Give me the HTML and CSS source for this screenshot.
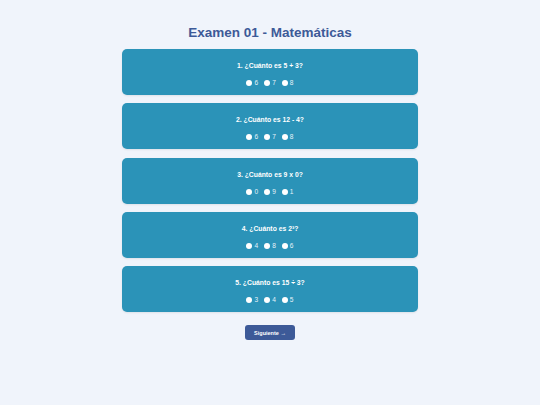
FILE: index.html
```html
<!DOCTYPE html>
<html lang="es">
<head>
<meta charset="utf-8">
<title>Examen 01 - Matemáticas</title>
<link rel="stylesheet" href="styles.css">
</head>
<body>
<main class="page">
  <h1 class="title">Examen 01 - Matemáticas</h1>
  <div class="questions">
    <section class="card">
      <p class="question">1. ¿Cuánto es 5 + 3?</p>
      <div class="options">
        <label class="option"><span class="radio"></span>6</label>
        <label class="option"><span class="radio"></span>7</label>
        <label class="option"><span class="radio"></span>8</label>
      </div>
    </section>
    <section class="card">
      <p class="question">2. ¿Cuánto es 12 - 4?</p>
      <div class="options">
        <label class="option"><span class="radio"></span>6</label>
        <label class="option"><span class="radio"></span>7</label>
        <label class="option"><span class="radio"></span>8</label>
      </div>
    </section>
    <section class="card">
      <p class="question">3. ¿Cuánto es 9 x 0?</p>
      <div class="options">
        <label class="option"><span class="radio"></span>0</label>
        <label class="option"><span class="radio"></span>9</label>
        <label class="option"><span class="radio"></span>1</label>
      </div>
    </section>
    <section class="card">
      <p class="question">4. ¿Cuánto es 2³?</p>
      <div class="options">
        <label class="option"><span class="radio"></span>4</label>
        <label class="option"><span class="radio"></span>8</label>
        <label class="option"><span class="radio"></span>6</label>
      </div>
    </section>
    <section class="card">
      <p class="question">5. ¿Cuánto es 15 ÷ 3?</p>
      <div class="options">
        <label class="option"><span class="radio"></span>3</label>
        <label class="option"><span class="radio"></span>4</label>
        <label class="option"><span class="radio"></span>5</label>
      </div>
    </section>
  </div>
  <button class="next" type="button">Siguiente →</button>
</main>
</body>
</html>
```
FILE: styles.css
```css
html, body {
  margin: 0;
  padding: 0;
}
body {
  background: #f0f4fb;
  font-family: "Liberation Sans", Arial, sans-serif;
  width: 540px;
  height: 405px;
}
.page {
  display: flex;
  flex-direction: column;
  align-items: center;
  padding-top: 24px;
}
.title {
  margin: 0;
  font-size: 13.5px;
  line-height: 17px;
  font-weight: bold;
  color: #3d5a98;
}
.questions {
  margin-top: 8px;
  width: 296px;
  display: flex;
  flex-direction: column;
  gap: 8.3px;
}
.card {
  background: #2b93b8;
  border-radius: 5px;
  height: 46px;
  box-sizing: border-box;
  padding-top: 13px;
  display: flex;
  flex-direction: column;
  align-items: center;
  box-shadow: 0 1px 2px rgba(0,0,0,0.08);
}
.question {
  margin: 0;
  color: #ffffff;
  font-size: 6.8px;
  line-height: 8px;
  font-weight: bold;
}
.options {
  margin-top: 9px;
  display: flex;
  gap: 6px;
  color: #e6f2f8;
  font-size: 6.6px;
  line-height: 8px;
}
.option {
  display: flex;
  align-items: center;
  gap: 2px;
}
.radio {
  flex: 0 0 6px;
  width: 6px;
  height: 6px;
  border-radius: 50%;
  background: #ffffff;
}
.next {
  margin-top: 13px;
  width: 50px;
  height: 15px;
  padding: 0;
  border: none;
  border-radius: 3px;
  background: #3d5a98;
  color: #ffffff;
  font-family: "Liberation Sans", Arial, sans-serif;
  font-size: 5.5px;
  font-weight: bold;
}
```
